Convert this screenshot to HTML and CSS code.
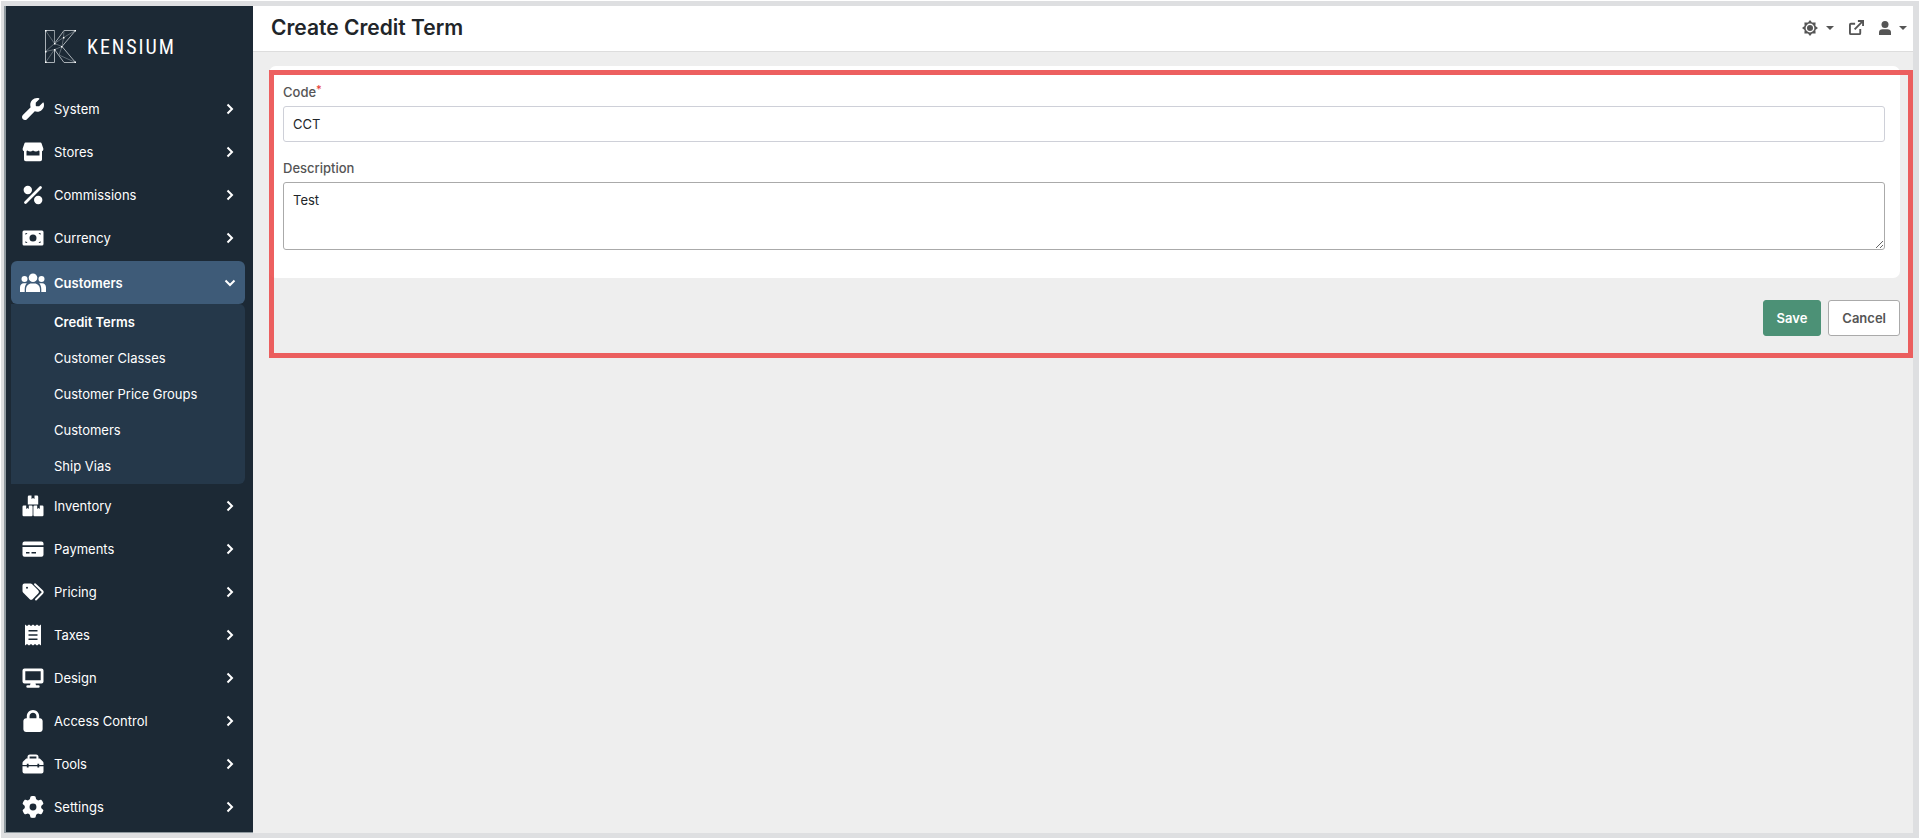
FILE: index.html
```html
<!doctype html>
<html lang="en">
<head>
    <meta charset="utf-8">
    <meta name="viewport" content="width=device-width, initial-scale=1">
    <title>Create Credit Term - Kensium</title>
    <link rel="stylesheet" href="styles.css">
</head>

<body>
<!-- Icon sprite -->
<svg class="sprite" aria-hidden="true">
    <symbol id="i-chevron" viewBox="0 0 10 12">
        <path d="M2.500 1.500 7 6l-4.500 4.500" fill="none" stroke="currentColor" stroke-width="2"/>
    </symbol>
    <symbol id="i-wrench" viewBox="0 0 512 512">
        <path d="M352 320c88.400 0 160-71.600 160-160c0-15.300-2.200-30.100-6.200-44.200c-3.100-10.800-16.400-13.200-24.300-5.300l-76.800 76.800c-3 3-7.100 4.700-11.300 4.700H336c-8.800 0-16-7.200-16-16V118.600c0-4.200 1.700-8.300 4.700-11.300l76.800-76.800c7.900-7.900 5.400-21.200-5.300-24.300C382.100 2.200 367.300 0 352 0C263.600 0 192 71.600 192 160c0 19.100 3.400 37.500 9.500 54.500L19.900 396.100C7.200 408.800 0 426.100 0 444.100C0 481.600 30.400 512 67.900 512c18 0 35.300-7.200 48-19.900L297.500 310.500c17 6.200 35.400 9.500 54.500 9.500z"/>
    </symbol>
    <symbol id="i-store" viewBox="0 0 22 22">
        <path d="M3.500 1.500h15a1 1 0 0 1 1 .8L21.300 7.500a2.600 2.600 0 0 1-2 3q-1.600 0-2.600-1-1.400 1-2.800 1t-2.900-1q-1.400 1-2.800 1t-2.900-1q-1 1-2.600 1a2.600 2.600 0 0 1-2-3l1.800-5.200a1 1 0 0 1 1-.8z"/>
        <path d="M2 10h2.500v4.500h13V10H20v8.500a1.800 1.800 0 0 1-1.800 1.800H3.800A1.800 1.800 0 0 1 2 18.500z"/>
    </symbol>
    <symbol id="i-percent" viewBox="0 0 22 22">
        <circle cx="5.800" cy="6" r="4.200"/>
        <circle cx="16.200" cy="16" r="4.200"/>
        <path d="M3.500 18.500 18.500 3.500" stroke="currentColor" stroke-width="2.800" stroke-linecap="round"/>
    </symbol>
    <symbol id="i-money" viewBox="0 0 22 22">
        <path fill-rule="evenodd" d="M2 3.500h18a1.500 1.500 0 0 1 1.500 1.500v12a1.500 1.500 0 0 1-1.500 1.500H2A1.500 1.500 0 0 1 .5 17V5A1.500 1.500 0 0 1 2 3.500zM11 7.500a3.500 3.500 0 1 0 0 7 3.500 3.500 0 0 0 0-7zM3.500 6v2l2-2zm15 0h-2l2 2zm-15 10h2l-2-2zm15 0v-2l-2 2z"/>
    </symbol>
    <symbol id="i-users" viewBox="0 0 26 20">
        <circle cx="4.500" cy="6" r="3"/>
        <circle cx="21.500" cy="6" r="3"/>
        <circle cx="13" cy="4.800" r="4.300"/>
        <path d="M6 19v-2.500c0-3.500 2.500-6 5.500-6h3c3 0 5.500 2.500 5.500 6V19z"/>
        <path d="M0 19v-4.500C0 12 1.500 10.200 4 10.200h2.800C5.300 11.800 4.700 14 4.700 16.500V19zM26 19v-4.500c0-2.500-1.500-4.300-4-4.300h-2.800c1.500 1.600 2.100 3.800 2.100 6.300V19z"/>
    </symbol>
    <symbol id="i-boxes" viewBox="0 0 22 22">
        <path d="M7 .5h2.500v3.500l1.500-1 1.500 1V.5H15A1.200 1.200 0 0 1 16.200 1.700v7.800H5.800V1.700A1.200 1.200 0 0 1 7 .5z"/>
        <path d="M1.700 10.500h2.500V14l1.300-1 1.300 1v-3.500h2.600a1.200 1.200 0 0 1 1.200 1.200v8.400a1.200 1.200 0 0 1-1.200 1.200H1.700a1.200 1.200 0 0 1-1.200-1.200v-8.400a1.200 1.200 0 0 1 1.200-1.200z"/>
        <path d="M12.600 10.500h2.600V14l1.300-1 1.300 1v-3.500h2.500a1.200 1.200 0 0 1 1.200 1.200v8.400a1.200 1.200 0 0 1-1.200 1.200h-7.700a1.200 1.200 0 0 1-1.200-1.200v-8.400a1.200 1.200 0 0 1 1.200-1.200z"/>
    </symbol>
    <symbol id="i-card" viewBox="0 0 22 22">
        <path d="M2.500 3.500h17a2 2 0 0 1 2 2v1.700H.5V5.500a2 2 0 0 1 2-2z"/>
        <path fill-rule="evenodd" d="M.5 9h21v7.800a2 2 0 0 1-2 2h-17a2 2 0 0 1-2-2zM4 14v1.500h3.500V14zm5.500 0v1.500h4.500V14z"/>
    </symbol>
    <symbol id="i-tags" viewBox="0 0 22 22">
        <path fill-rule="evenodd" d="M.5 4.500A2 2 0 0 1 2.500 2.500h6a2.500 2.500 0 0 1 1.700.7l6 6a2.300 2.300 0 0 1 0 3.300l-5.400 5.500a2.300 2.300 0 0 1-3.300 0l-6.200-6.200A2.500 2.500 0 0 1 .5 10zM5 5.800a1 1 0 1 0 0 2 1 1 0 0 0 0-2z"/>
        <path d="m13 3.200 7.400 7a1.300 1.300 0 0 1 0 1.800l-6.400 6.500" fill="none" stroke="currentColor" stroke-width="1.900" stroke-linecap="round"/>
    </symbol>
    <symbol id="i-receipt" viewBox="0 0 22 22">
        <path fill-rule="evenodd" d="M3 .5 5 2 7 .5 9 2 11 .5 13 2 15 .5 17 2 19 .5v21L17 20l-2 1.500L13 20l-2 1.500L9 20l-2 1.500L5 20l-2 1.500zM6.500 6v1.400h9V6zm0 4.300v1.400h9v-1.400zm0 4.300V16h9v-1.400z"/>
    </symbol>
    <symbol id="i-desktop" viewBox="0 0 22 22">
        <path fill-rule="evenodd" d="M2.500 1.500h17a2 2 0 0 1 2 2v11a2 2 0 0 1-2 2h-6l.5 1.800h2.500a1.200 1.200 0 0 1 0 2.400h-11a1.200 1.200 0 0 1 0-2.400H8l.5-1.800h-6a2 2 0 0 1-2-2v-11a2 2 0 0 1 2-2zm.8 2.800v8.900h15.400V4.300z"/>
    </symbol>
    <symbol id="i-lock" viewBox="0 0 448 512">
        <path d="M144 144v48H304V144c0-44.200-35.800-80-80-80s-80 35.800-80 80zM80 192V144C80 64.500 144.500 0 224 0s144 64.500 144 144v48h16c35.300 0 64 28.700 64 64V448c0 35.300-28.700 64-64 64H64c-35.300 0-64-28.700-64-64V256c0-35.300 28.700-64 64-64H80z"/>
    </symbol>
    <symbol id="i-toolbox" viewBox="0 0 22 22">
        <path fill-rule="evenodd" d="M8 1.500h6a2.500 2.500 0 0 1 2.500 2.500v1.500h1.300l3.300 3.300.4 1V12h-4.300v-1.200h-1.800V12H6.600v-1.200H4.800V12H.5V9.800l.4-1 3.300-3.300h1.300V4A2.500 2.500 0 0 1 8 1.500zm-.4 2v2h6.800v-2z"/>
        <path d="M.5 13.200h4.300v1.200h1.800v-1.200h8.800v1.200h1.800v-1.200h4.300v5.300a2 2 0 0 1-2 2h-17a2 2 0 0 1-2-2z"/>
    </symbol>
    <symbol id="i-gear" viewBox="0 0 512 512">
        <path d="M495.900 166.600c3.200 8.700 .5 18.400-6.400 24.600l-43.300 39.400c1.100 8.300 1.700 16.800 1.700 25.400s-.6 17.100-1.700 25.400l43.300 39.400c6.900 6.200 9.600 15.900 6.400 24.600c-4.400 11.900-9.700 23.300-15.800 34.300l-4.700 8.100c-6.600 11-14 21.400-22.100 31.200c-5.900 7.200-15.700 9.600-24.500 6.800l-55.700-17.700c-13.400 10.300-28.200 18.900-44 25.400l-12.500 57.100c-2 9.100-9 16.300-18.200 17.800c-13.800 2.300-28 3.500-42.500 3.500s-28.700-1.200-42.500-3.500c-9.200-1.500-16.200-8.700-18.200-17.800l-12.500-57.100c-15.800-6.500-30.600-15.100-44-25.400L83.100 425.900c-8.800 2.800-18.600 .3-24.500-6.800c-8.100-9.800-15.500-20.200-22.100-31.200l-4.700-8.100c-6.100-11-11.400-22.400-15.800-34.300c-3.200-8.700-.5-18.400 6.400-24.600l43.300-39.400C64.600 273.100 64 264.600 64 256s.6-17.100 1.700-25.400L22.400 191.200c-6.900-6.200-9.600-15.900-6.400-24.600c4.400-11.900 9.700-23.300 15.800-34.300l4.700-8.100c6.600-11 14-21.400 22.100-31.200c5.900-7.200 15.700-9.600 24.500-6.800l55.700 17.700c13.400-10.300 28.200-18.900 44-25.400l12.500-57.100c2-9.100 9-16.300 18.200-17.800C227.300 1.200 241.500 0 256 0s28.700 1.200 42.500 3.500c9.200 1.500 16.200 8.700 18.200 17.800l12.500 57.100c15.800 6.500 30.600 15.100 44 25.400l55.700-17.700c8.800-2.800 18.600-.3 24.500 6.800c8.100 9.800 15.500 20.200 22.100 31.200l4.700 8.100c6.100 11 11.400 22.400 15.800 34.300zM256 336a80 80 0 1 0 0-160 80 80 0 1 0 0 160z"/>
    </symbol>
</svg>

<div class="app">
    <!-- Sidebar -->
    <aside class="sidebar">
        <a href="#" class="logo">
            <svg class="logo-mark" viewBox="0 0 31 33" aria-hidden="true">
                <path d="M.5.5h9v13L19 .5h11.500L17 16.500l13.500 16H19l-9.500-13v13h-9z"/>
                <path class="logo-web" d="M.5.5l9 13L.5 21.500l9-2L.5 32.500M9.500 13.500l7.500 3-7.500 3M30.500.5l-12 7-9 6M19 .5l-.5 7L17 16.500M14 25l16.500 7.500M17 16.500 14 25M9.500.5v13"/>
                <path class="logo-dots" d="M0 0h1.500v1.500H0zM29.500 0H31v1.500h-1.500zM9 13h1.500v1.500H9zM16 16h1.500v1.500H16zM0 21h1.500v1.500H0zM0 31.500h1.500V33H0zM29.500 31.500H31V33h-1.500zM18 7h1.500v1.500H18zM9 19h1.500v1.500H9z"/>
            </svg>
            <span class="logo-text">KENSIUM</span>
        </a>

        <nav class="menu">
            <a href="#" class="menu-item"><svg class="menu-icon"><use href="#i-wrench"/></svg>System<svg class="arrow"><use href="#i-chevron"/></svg></a>
            <a href="#" class="menu-item"><svg class="menu-icon"><use href="#i-store"/></svg>Stores<svg class="arrow"><use href="#i-chevron"/></svg></a>
            <a href="#" class="menu-item"><svg class="menu-icon"><use href="#i-percent"/></svg>Commissions<svg class="arrow"><use href="#i-chevron"/></svg></a>
            <a href="#" class="menu-item"><svg class="menu-icon"><use href="#i-money"/></svg>Currency<svg class="arrow"><use href="#i-chevron"/></svg></a>
            <a href="#" class="menu-item active"><svg class="menu-icon"><use href="#i-users"/></svg>Customers<svg class="arrow"><use href="#i-chevron"/></svg></a>
            <div class="submenu">
                <a href="#" class="current">Credit Terms</a>
                <a href="#">Customer Classes</a>
                <a href="#">Customer Price Groups</a>
                <a href="#">Customers</a>
                <a href="#">Ship Vias</a>
            </div>
            <a href="#" class="menu-item"><svg class="menu-icon"><use href="#i-boxes"/></svg>Inventory<svg class="arrow"><use href="#i-chevron"/></svg></a>
            <a href="#" class="menu-item"><svg class="menu-icon"><use href="#i-card"/></svg>Payments<svg class="arrow"><use href="#i-chevron"/></svg></a>
            <a href="#" class="menu-item"><svg class="menu-icon"><use href="#i-tags"/></svg>Pricing<svg class="arrow"><use href="#i-chevron"/></svg></a>
            <a href="#" class="menu-item"><svg class="menu-icon"><use href="#i-receipt"/></svg>Taxes<svg class="arrow"><use href="#i-chevron"/></svg></a>
            <a href="#" class="menu-item"><svg class="menu-icon"><use href="#i-desktop"/></svg>Design<svg class="arrow"><use href="#i-chevron"/></svg></a>
            <a href="#" class="menu-item"><svg class="menu-icon"><use href="#i-lock"/></svg>Access Control<svg class="arrow"><use href="#i-chevron"/></svg></a>
            <a href="#" class="menu-item"><svg class="menu-icon"><use href="#i-toolbox"/></svg>Tools<svg class="arrow"><use href="#i-chevron"/></svg></a>
            <a href="#" class="menu-item"><svg class="menu-icon"><use href="#i-gear"/></svg>Settings<svg class="arrow"><use href="#i-chevron"/></svg></a>
        </nav>
    </aside>

    <!-- Page -->
    <div class="page">
        <header class="topbar">
            <h1>Create Credit Term</h1>
            <div class="tools">
                <button type="button" class="tool" aria-label="Theme">
                    <svg width="16" height="16" viewBox="0 0 16 16" aria-hidden="true">
                        <path fill-rule="evenodd" d="M8 0l2 2.600 3.600-.2-.2 3.600L16 8l-2.600 2 .2 3.600-3.600-.2L8 16l-2-2.600-3.600.2.200-3.600L0 8l2.600-2-.2-3.600 3.600.2zM8 3.600a4.400 4.400 0 1 0 0 8.800 4.400 4.400 0 0 0 0-8.800z"/>
                        <circle cx="8" cy="8" r="3"/>
                    </svg>
                    <span class="caret"></span>
                </button>
                <a href="#" class="tool" aria-label="Open store">
                    <svg width="15" height="15" viewBox="0 0 16 16" aria-hidden="true">
                        <path d="M6.500 4H2a1 1 0 0 0-1 1v9a1 1 0 0 0 1 1h9a1 1 0 0 0 1-1v-4.500M9.500 1H15v5.500M15 1 6 10" fill="none" stroke="currentColor" stroke-width="2"/>
                    </svg>
                </a>
                <button type="button" class="tool" aria-label="Account">
                    <svg width="12" height="14" viewBox="0 0 12 14" aria-hidden="true">
                        <circle cx="6" cy="3.500" r="3.500"/>
                        <path d="M0 14v-2.500C0 9.500 1.500 8.300 3.500 8.300h5c2 0 3.500 1.200 3.500 3.200V14z"/>
                    </svg>
                    <span class="caret"></span>
                </button>
            </div>
        </header>

        <main class="content">
            <form>
                <div class="card">
                    <label for="code">Code<span class="required">*</span></label>
                    <input type="text" id="code" value="CCT">
                    <label for="description">Description</label>
                    <textarea id="description">Test</textarea>
                </div>
                <div class="actions">
                    <button type="submit" class="btn btn-primary">Save</button>
                    <button type="button" class="btn">Cancel</button>
                </div>
            </form>
            <div class="highlight"></div>
        </main>
    </div>
</div>
</body>
</html>
```
FILE: styles.css
```css
:root {
    --sidebar: #1c2935;
    --submenu: #25384a;
    --active: #3e5b78;
    --background: #eeeeee;
    --frame: #dedfe1;
    --text: #212529;
    --muted: #555555;
    --border: #ced0d8;
    --border-dark: #aaaaaa;
    --primary: #4c9176;
    --highlight: rgba(234, 65, 65, 0.84);
}

* {
    box-sizing: border-box;
}

body {
    margin: 0;
    padding: 1px;
    background: #ffffff;
    color: var(--text);
    font: 13px/20px Inter, "Liberation Sans", sans-serif;
}

a {
    color: inherit;
    text-decoration: none;
}

svg {
    fill: currentColor;
}

.sprite {
    display: none;
}

.app {
    display: flex;
    min-height: calc(100vh - 2px);
    border: solid var(--frame);
    border-width: 5px 6px 5px 3px;
}

/* Sidebar */
.sidebar {
    flex: none;
    width: 249px;
    border-left: 2px solid #8f999f;
    border-bottom: 1px solid #8f999f;
    background: var(--sidebar);
    color: #ffffff;
}

.logo {
    display: flex;
    align-items: center;
    gap: 11px;
    height: 81px;
    padding: 0 0 0 39px;
}

.logo-mark {
    width: 31px;
    height: 33px;
    fill: none;
    stroke: #a9b0b6;
    stroke-width: 1;
}

.logo-mark .logo-web {
    stroke: #7d868e;
    stroke-width: 0.7;
}

.logo-mark .logo-dots {
    fill: #ffffff;
    stroke: none;
}

.logo-text {
    font: 20px/20px "Liberation Sans Narrow", "Roboto Condensed", "Liberation Sans", sans-serif;
    letter-spacing: 2px;
}

.menu {
    padding: 0 8px 0 5px;
}

.menu-item {
    display: flex;
    align-items: center;
    height: 43px;
    padding: 0 8px 0 9px;
}

.menu-icon {
    flex: none;
    width: 26px;
    height: 22px;
    margin-right: 8px;
}

.arrow {
    width: 14px;
    height: 12px;
    margin-left: auto;
}

.menu-item.active {
    margin-top: 2px;
    border-radius: 6px;
    background: var(--active);
    font-weight: 600;
}

.menu-item.active .arrow {
    transform: rotate(90deg);
}

.submenu {
    border-radius: 0 6px 6px 0;
    background: var(--submenu);
}

.submenu a {
    display: block;
    padding: 8px 0 8px 43px;
}

.submenu .current {
    font-weight: 600;
}

/* Top bar */
.page {
    flex: 1;
    min-width: 0;
    background: var(--background);
}

.topbar {
    display: flex;
    align-items: center;
    justify-content: space-between;
    height: 46px;
    padding: 0 6px 2px 18px;
    border-bottom: 1px solid #dddddd;
    background: #ffffff;
}

h1 {
    margin: 0;
    font-size: 21px;
    font-weight: 600;
    line-height: 24px;
}

.tools {
    display: flex;
    gap: 15px;
}

.tool {
    display: flex;
    align-items: center;
    gap: 8px;
    padding: 0;
    border: 0;
    background: none;
    color: var(--muted);
}

.caret {
    border: solid transparent;
    border-width: 4px 4px 0;
    border-top-color: currentColor;
}

/* Form */
.content {
    position: relative;
    padding: 14px 13px 14px 16px;
}

.card {
    padding: 16px 15px 28px 14px;
    border-radius: 7px;
    background: #ffffff;
}

label {
    display: block;
    margin-bottom: 4px;
    color: var(--muted);
    font-weight: 500;
}

.required {
    color: #e53935;
    font-size: 11px;
    line-height: 0;
    vertical-align: 4px;
}

input,
textarea {
    display: block;
    width: 100%;
    padding: 7px 9px;
    border: 1px solid var(--border);
    border-radius: 3px;
    background: #ffffff;
    color: var(--text);
    font: inherit;
}

input {
    height: 36px;
    margin-bottom: 16px;
}

textarea {
    height: 68px;
    border-color: var(--border-dark);
}

.actions {
    display: flex;
    justify-content: flex-end;
    gap: 7px;
    margin-top: 22px;
}

.btn {
    height: 36px;
    padding: 0 13px;
    border: 1px solid var(--border-dark);
    border-radius: 3px;
    background: #ffffff;
    color: var(--muted);
    font: inherit;
    font-weight: 600;
}

.btn-primary {
    border-color: var(--primary);
    background: var(--primary);
    color: #ffffff;
}

/* Outline drawn over the form */
.highlight {
    position: absolute;
    inset: 18px 0 -8px 16px;
    border: 5px solid var(--highlight);
    pointer-events: none;
}
```
